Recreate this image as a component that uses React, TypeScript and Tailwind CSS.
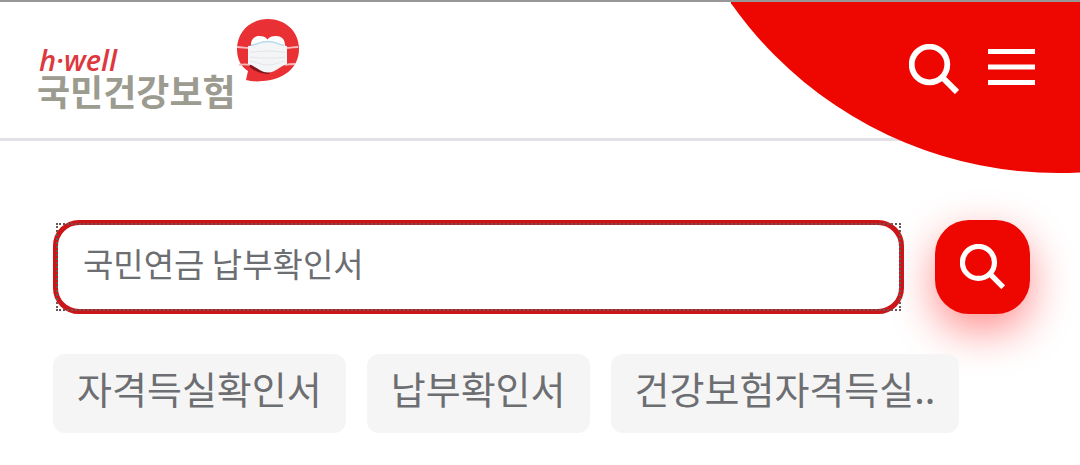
import { useState } from 'react'

const keywords = ['자격득실확인서', '납부확인서', '건강보험자격득실..']

function SearchIcon({ className }: { className?: string }) {
  return (
    <svg viewBox="0 0 50 50" fill="none" stroke="#fff" className={className} aria-hidden="true">
      <circle cx="20.5" cy="20.5" r="17.8" strokeWidth="5.8" />
      <path d="M33.5 33.5 48 48" strokeWidth="6" />
    </svg>
  )
}

function MenuIcon() {
  return (
    <svg viewBox="0 0 47 50" fill="#fff" className="h-[50px] w-[47px]" aria-hidden="true">
      <rect y="5" width="47" height="5" />
      <rect y="20.5" width="47" height="5" />
      <rect y="36" width="47" height="5" />
    </svg>
  )
}

function MaskSymbol() {
  return (
    <svg viewBox="0 0 64 64" className="h-16 w-16" aria-hidden="true">
      <path
        d="M32 1C14 1 1 14 1 31c0 9 3 17 11 22l-2 9c5 1 10 2 16 1C46 62 63 51 63 31 63 13 49 1 32 1Z"
        fill="#e93034"
      />
      <path d="M15 32V27c0-6 4-9 8-9 4 0 7 1 8.500 3.500C33 19 36 18 40 18c5 0 9 3 9 9v5Z" fill="#fff" />
      <path d="M12 47c5 6 13 9 21 9l2-4-20-7Z" fill="#86141b" />
      <path
        d="M1 29c5 0 8 1 12 1M50 30c5 0 8-1 12-1M3 47c4-1 7-1 11 0M49 47c4-1 7-1 10-1"
        fill="none"
        stroke="#f6b9bb"
        strokeWidth="1.8"
      />
      <path
        d="M12 28c7 0 12-4 20-4s13 4 19 4v18c-7 2-11 8.500-19 8.500S20 48 12 46Z"
        fill="#f4f5f6"
      />
      <path d="M15 27.500c5-1 10-4 17-4S43 26.500 48 27.500" fill="none" stroke="#b4dbee" strokeWidth="1.5" />
      <path
        d="M14 34c6 0 11-1 18-1s12 1 17 1M14 39c6 1 11 1 18 1s12 0 17-1M14 43c6 1 11 4 18 4s12-3 17-4"
        fill="none"
        stroke="#e3e5e8"
        strokeWidth="1"
      />
    </svg>
  )
}

function Header() {
  return (
    <header className="relative flex h-[141px] items-start justify-between border-t-2 border-b-3 border-t-[#979797] border-b-[#e2e1e6] pr-[45px] pl-[37px]">
      {/* red disc hanging from the top right corner */}
      <div className="pointer-events-none absolute top-0 right-0 h-[171px] w-[349px] overflow-hidden">
        <div className="absolute -right-[378px] bottom-0 size-[800px] rounded-full bg-[#ee0701]" />
      </div>
      <a href="/" className="flex items-start pt-4">
        <span className="flex flex-col pt-7">
          <span className="pl-[2px] font-['Open_Sans',sans-serif] text-[29px] leading-7 font-semibold text-[#dd383e] italic">
            h·well
          </span>
          <span className="font-['Noto_Sans_CJK_KR',sans-serif] text-[36px] leading-8 font-bold text-[#9c9b90]">
            국민건강보험
          </span>
        </span>
        <MaskSymbol />
      </a>
      <nav className="relative flex items-start gap-[29px] pt-[42px]">
        <button type="button" aria-label="검색">
          <SearchIcon className="size-[50px]" />
        </button>
        <button type="button" aria-label="전체메뉴">
          <MenuIcon />
        </button>
      </nav>
    </header>
  )
}

export default function App() {
  const [query, setQuery] = useState('국민연금 납부확인서')

  return (
    <div className="bg-white font-['Noto_Sans_CJK_KR',sans-serif]">
      <Header />
      <main className="pt-[79px] pr-[50px] pb-8 pl-[53px]">
        <form className="flex gap-[31px]" onSubmit={(e) => e.preventDefault()}>
          <div className="relative min-w-0 flex-1">
            <input
              type="text"
              aria-label="검색어"
              value={query}
              onChange={(e) => setQuery(e.target.value)}
              className="h-[94px] w-full rounded-[26px] border-5 border-[#cb1518] bg-white px-[25px] pb-2 text-[33px] text-[#6d6e72] outline-none"
            />
            {/* dotted focus ring with square corners */}
            <span className="pointer-events-none absolute inset-[3px] border-2 border-dotted border-[#6b5555]" />
          </div>
          <button
            type="submit"
            aria-label="검색"
            className="flex h-[94px] w-[95px] items-center justify-center rounded-[34px] bg-[#ee0701] pb-[2px] shadow-[0_16px_44px_rgba(255,0,0,0.45)]"
          >
            <SearchIcon className="size-[45px]" />
          </button>
        </form>
        <ul className="relative mt-10 flex gap-[21px]">
          {keywords.map((word) => (
            <li key={word}>
              <button
                type="button"
                onClick={() => setQuery(word)}
                className="h-[79px] rounded-xl bg-[#f5f5f5] px-6 pb-3 text-[38px] whitespace-nowrap text-[#6d6e72]"
              >
                {word}
              </button>
            </li>
          ))}
        </ul>
      </main>
    </div>
  )
}
